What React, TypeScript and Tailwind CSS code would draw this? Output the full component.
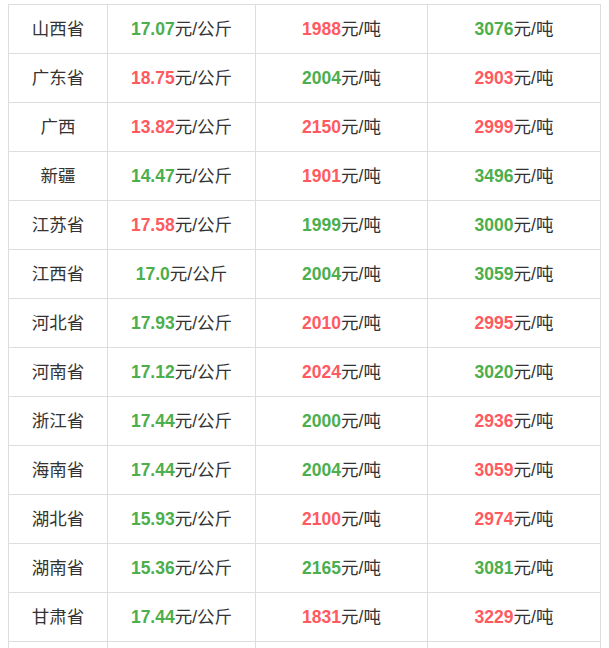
import React from 'react';

type Tone = 'up' | 'down';

type PriceRow = {
  region: string;
  pork: [string, Tone];
  corn: [string, Tone];
  meal: [string, Tone];
};

// 'up' = red, 'down' = green.
const ROWS: PriceRow[] = [
  { region: '山西省', pork: ['17.07', 'down'], corn: ['1988', 'up'], meal: ['3076', 'down'] },
  { region: '广东省', pork: ['18.75', 'up'], corn: ['2004', 'down'], meal: ['2903', 'up'] },
  { region: '广西', pork: ['13.82', 'up'], corn: ['2150', 'up'], meal: ['2999', 'up'] },
  { region: '新疆', pork: ['14.47', 'down'], corn: ['1901', 'up'], meal: ['3496', 'down'] },
  { region: '江苏省', pork: ['17.58', 'up'], corn: ['1999', 'down'], meal: ['3000', 'down'] },
  { region: '江西省', pork: ['17.0', 'down'], corn: ['2004', 'down'], meal: ['3059', 'down'] },
  { region: '河北省', pork: ['17.93', 'down'], corn: ['2010', 'up'], meal: ['2995', 'up'] },
  { region: '河南省', pork: ['17.12', 'down'], corn: ['2024', 'up'], meal: ['3020', 'down'] },
  { region: '浙江省', pork: ['17.44', 'down'], corn: ['2000', 'down'], meal: ['2936', 'up'] },
  { region: '海南省', pork: ['17.44', 'down'], corn: ['2004', 'down'], meal: ['3059', 'up'] },
  { region: '湖北省', pork: ['15.93', 'down'], corn: ['2100', 'up'], meal: ['2974', 'up'] },
  { region: '湖南省', pork: ['15.36', 'down'], corn: ['2165', 'down'], meal: ['3081', 'down'] },
  { region: '甘肃省', pork: ['17.44', 'down'], corn: ['1831', 'up'], meal: ['3229', 'up'] },
];

const Price: React.FC<{ value: [string, Tone]; unit: string }> = ({ value, unit }) => (
  <>
    <span
      className={
        value[1] === 'up'
          ? 'font-bold text-[#ff5a5f] [font-family:"Liberation_Sans",Arial,sans-serif]'
          : 'font-bold text-[#4cae4c] [font-family:"Liberation_Sans",Arial,sans-serif]'
      }
    >
      {value[0]}
    </span>
    {unit}
  </>
);

const cell = 'h-[49px] border border-[#dddddd] p-0 text-center align-middle';

export default function App() {
  return (
    <div className="h-[648px] overflow-hidden bg-white pt-[4px] pl-[8px] text-[17.5px] text-[#333333] [font-family:'Liberation_Sans','Noto_Sans_CJK_SC',sans-serif]">
      <table className="w-[592px] table-fixed border-collapse">
        <colgroup>
          <col className="w-[99px]" />
          <col className="w-[148px]" />
          <col className="w-[172px]" />
          <col className="w-[173px]" />
        </colgroup>
        <tbody>
          {ROWS.map((row) => (
            <tr key={row.region}>
              <td className={cell}>{row.region}</td>
              <td className={cell}>
                <Price value={row.pork} unit="元/公斤" />
              </td>
              <td className={cell}>
                <Price value={row.corn} unit="元/吨" />
              </td>
              <td className={cell}>
                <Price value={row.meal} unit="元/吨" />
              </td>
            </tr>
          ))}
          <tr>
            <td className={cell} />
            <td className={cell} />
            <td className={cell} />
            <td className={cell} />
          </tr>
        </tbody>
      </table>
    </div>
  );
}
